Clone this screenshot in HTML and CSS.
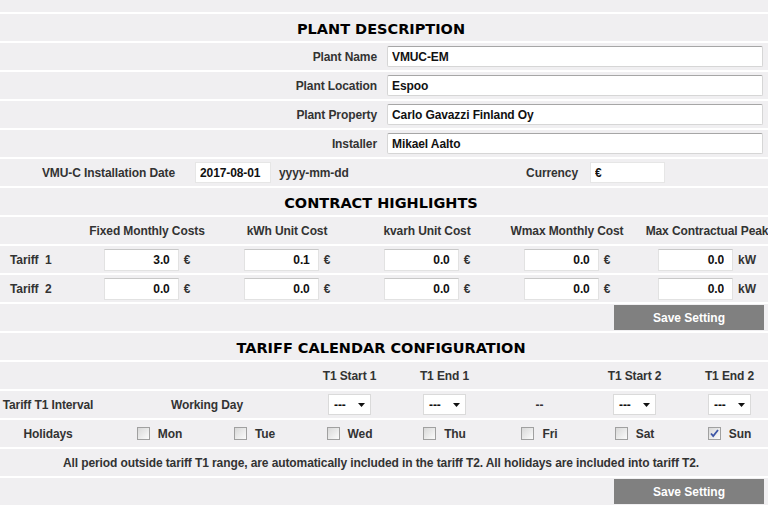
FILE: index.html
```html
<!DOCTYPE html>
<html lang="en">
<head>
  <meta charset="UTF-8">
  <title>Plant Settings</title>
  <link rel="stylesheet" href="styles.css">
</head>
<body>
<div class="page">
  <div class="row spacer"></div>

  <!-- plant description -->
  <div class="row title">PLANT DESCRIPTION</div>
  <div class="row field">
    <label>Plant Name</label>
    <input type="text" class="wide" value="VMUC-EM">
  </div>
  <div class="row field">
    <label>Plant Location</label>
    <input type="text" class="wide" value="Espoo">
  </div>
  <div class="row field">
    <label>Plant Property</label>
    <input type="text" class="wide" value="Carlo Gavazzi Finland Oy">
  </div>
  <div class="row field">
    <label>Installer</label>
    <input type="text" class="wide" value="Mikael Aalto">
  </div>
  <div class="row date-row">
    <label>VMU-C Installation Date</label>
    <input type="text" class="date" value="2017-08-01">
    <span class="hint">yyyy-mm-dd</span>
    <label>Currency</label>
    <input type="text" class="date" value="€">
  </div>

  <!-- contract -->
  <div class="row title">CONTRACT HIGHLIGHTS</div>
  <div class="row costs head">
    <span></span>
    <span>Fixed Monthly Costs</span>
    <span>kWh Unit Cost</span>
    <span>kvarh Unit Cost</span>
    <span>Wmax Monthly Cost</span>
    <span>Max Contractual Peak</span>
  </div>
  <div class="row costs">
    <span class="tariff">Tariff&nbsp; 1</span>
    <span class="cell"><input type="text" class="num" value="3.0"> €</span>
    <span class="cell"><input type="text" class="num" value="0.1"> €</span>
    <span class="cell"><input type="text" class="num" value="0.0"> €</span>
    <span class="cell"><input type="text" class="num" value="0.0"> €</span>
    <span class="cell"><input type="text" class="num" value="0.0"> kW</span>
  </div>
  <div class="row costs">
    <span class="tariff">Tariff&nbsp; 2</span>
    <span class="cell"><input type="text" class="num" value="0.0"> €</span>
    <span class="cell"><input type="text" class="num" value="0.0"> €</span>
    <span class="cell"><input type="text" class="num" value="0.0"> €</span>
    <span class="cell"><input type="text" class="num" value="0.0"> €</span>
    <span class="cell"><input type="text" class="num" value="0.0"> kW</span>
  </div>
  <div class="row actions"><button type="button">Save Setting</button></div>

  <!-- calendar -->
  <div class="row title">TARIFF CALENDAR CONFIGURATION</div>
  <div class="row cal">
    <span></span><span></span><span></span>
    <span>T1 Start 1</span>
    <span>T1 End 1</span>
    <span></span>
    <span>T1 Start 2</span>
    <span>T1 End 2</span>
  </div>
  <div class="row cal">
    <span class="first">Tariff T1 Interval</span>
    <span class="span2">Working Day</span>
    <span><span class="select">---<svg width="7" height="4" viewBox="0 0 7 4"><path d="M0 0h7L3.5 4z" fill="#111"/></svg></span></span>
    <span><span class="select">---<svg width="7" height="4" viewBox="0 0 7 4"><path d="M0 0h7L3.5 4z" fill="#111"/></svg></span></span>
    <span>--</span>
    <span><span class="select">---<svg width="7" height="4" viewBox="0 0 7 4"><path d="M0 0h7L3.5 4z" fill="#111"/></svg></span></span>
    <span><span class="select">---<svg width="7" height="4" viewBox="0 0 7 4"><path d="M0 0h7L3.5 4z" fill="#111"/></svg></span></span>
  </div>
  <div class="row cal">
    <span class="first">Holidays</span>
    <span><span class="check"></span>Mon</span>
    <span><span class="check"></span>Tue</span>
    <span><span class="check"></span>Wed</span>
    <span><span class="check"></span>Thu</span>
    <span><span class="check"></span>Fri</span>
    <span><span class="check"></span>Sat</span>
    <span><span class="check"><svg width="11" height="11" viewBox="0 0 11 11"><path d="M2 5.5l2.2 2.6L9 2" fill="none" stroke="#3d56a6" stroke-width="1.8"/></svg></span>Sun</span>
  </div>
  <div class="row note">All period outside tariff T1 range, are automatically included in the tariff T2. All holidays are included into tariff T2.</div>
  <div class="row actions"><button type="button">Save Setting</button></div>
</div>
</body>
</html>
```

FILE: styles.css
```css
html, body {
  margin: 0;
  overflow: hidden;
  background: #fff;
}
body {
  font-family: "Liberation Sans", Arial, sans-serif;
  font-size: 12px;
  font-weight: bold;
  color: #333;
  letter-spacing: -0.1px;
}
.page {
  width: 777px;
}
.row {
  height: 27px;
  margin-bottom: 2px;
  background: #f0eff1;
  display: flex;
  align-items: center;
}
.spacer {
  height: 12px;
}
.title {
  justify-content: center;
  padding-right: 15px;
  font-family: "DejaVu Sans", Verdana, sans-serif;
  font-size: 14.5px;
  color: #000;
  letter-spacing: 0;
  padding-top: 2px;
  box-sizing: border-box;
}
input {
  font-family: "Liberation Sans", Arial, sans-serif;
  font-size: 12px;
  font-weight: bold;
  color: #111;
  letter-spacing: -0.1px;
  background: #fff;
  box-sizing: border-box;
  margin: 0;
  outline: none;
}
.field {
  display: grid;
  grid-template-columns: 382px 1fr;
}
.field label {
  text-align: right;
  padding-right: 5px;
}
.wide {
  width: 376px;
  height: 21px;
  margin-left: 5px;
  padding: 0 4px;
  border: 1px solid #d6d6d6;
  border-top-color: #a6a6a6;
  border-radius: 2px;
}
.date-row {
  display: grid;
  grid-template-columns: 187px 92px 121px 190px 1fr;
}
.date-row label {
  text-align: right;
  padding-right: 12px;
}
.date {
  width: 76px;
  height: 21px;
  margin-left: 8px;
  padding: 0 4px;
  border: 1px solid #e6e6e6;
}
.date-row label + input + .hint + label + input {
  margin-left: 0;
  width: 75px;
}
.costs {
  display: grid;
  grid-template-columns: 77px repeat(5, 140px);
}
.costs.head span {
  text-align: center;
}
.tariff {
  padding-left: 10px;
}
.cell {
  display: flex;
  justify-content: center;
  align-items: center;
  gap: 5px;
}
.num {
  width: 75px;
  height: 22px;
  text-align: right;
  padding: 0 8px 0 4px;
  border: 1px solid #e2e2e2;
  border-top-color: #c8c8c8;
}
.actions {
  justify-content: flex-end;
  padding-right: 13px;
}
button {
  width: 150px;
  height: 25px;
  background: #808080;
  color: #fff;
  border: none;
  font-family: "Liberation Sans", Arial, sans-serif;
  font-size: 12px;
  font-weight: bold;
  cursor: pointer;
}
.cal {
  display: grid;
  grid-template-columns: 112px repeat(7, 95px);
}
.cal > span {
  display: flex;
  justify-content: center;
  align-items: center;
}
.cal .first {
  padding-right: 16px;
}
.cal .span2 {
  grid-column: span 2;
}
.select {
  width: 43px;
  height: 21px;
  box-sizing: border-box;
  background: #fff;
  border: 1px solid #dadada;
  display: flex;
  align-items: center;
  justify-content: space-between;
  padding: 0 5px 0 5px;
  color: #111;
}
.check {
  width: 13px;
  height: 13px;
  box-sizing: border-box;
  border: 1px solid #a0a0a0;
  background: linear-gradient(135deg, #d8d8d8, #fbfbfb);
  margin-right: 8px;
  display: inline-flex;
  align-items: center;
  justify-content: center;
}
.note {
  justify-content: center;
  padding-right: 15px;
}
```
